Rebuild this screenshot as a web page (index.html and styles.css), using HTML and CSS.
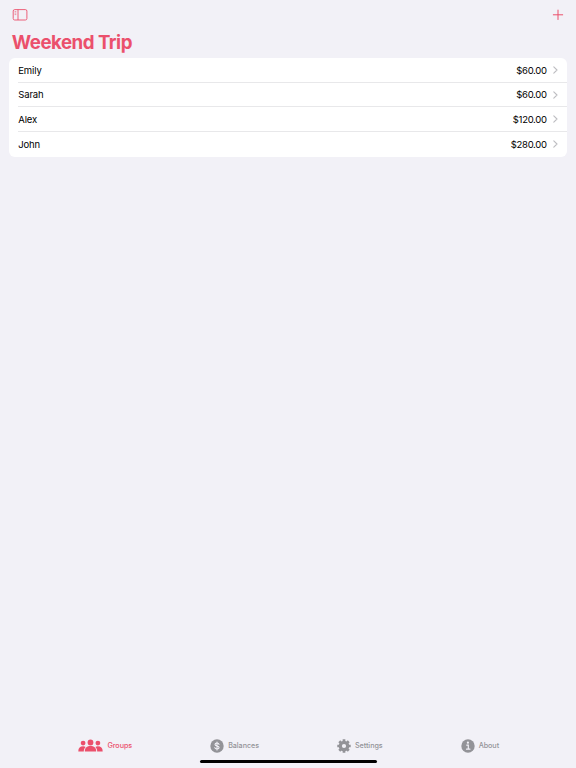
FILE: index.html
```html
<!DOCTYPE html>
<html lang="en">
<head>
  <meta charset="UTF-8">
  <meta name="viewport" content="width=device-width, initial-scale=1.0">
  <title>Weekend Trip</title>
  <link rel="stylesheet" href="styles.css">
</head>
<body>

  <!-- Toolbar -->
  <header class="toolbar">
    <button class="icon-button" aria-label="Toggle sidebar">
      <svg width="16" height="12" viewBox="0 0 16 12" fill="none" stroke="currentColor">
        <rect x="1.2" y="0.6" width="13.7" height="10.4" rx="1.5" stroke-width="0.9"/>
        <path d="M6 0.6v10.4" stroke-width="0.9"/>
        <path d="M2.6 2.6h1.7M2.6 4.1h1.7M2.6 5.6h1.7" stroke-width="0.6"/>
      </svg>
    </button>
    <button class="icon-button" aria-label="Add">
      <svg width="12" height="12" viewBox="0 0 12 12" fill="none" stroke="currentColor" stroke-width="1" stroke-linecap="round">
        <path d="M6 1.1v9.4M1.3 5.8h9.4"/>
      </svg>
    </button>
  </header>

  <main>
    <h1>Weekend Trip</h1>

    <ul class="list">
      <li class="row">
        <span class="name">Emily</span>
        <span class="amount">$60.00</span>
        <svg class="chevron" width="5" height="8" viewBox="0 0 5 8"><path d="M0.8 0.8L4 4L0.8 7.2"/></svg>
      </li>
      <li class="row">
        <span class="name">Sarah</span>
        <span class="amount">$60.00</span>
        <svg class="chevron" width="5" height="8" viewBox="0 0 5 8"><path d="M0.8 0.8L4 4L0.8 7.2"/></svg>
      </li>
      <li class="row">
        <span class="name">Alex</span>
        <span class="amount">$120.00</span>
        <svg class="chevron" width="5" height="8" viewBox="0 0 5 8"><path d="M0.8 0.8L4 4L0.8 7.2"/></svg>
      </li>
      <li class="row">
        <span class="name">John</span>
        <span class="amount">$280.00</span>
        <svg class="chevron" width="5" height="8" viewBox="0 0 5 8"><path d="M0.8 0.8L4 4L0.8 7.2"/></svg>
      </li>
    </ul>
  </main>

  <!-- Tab bar -->
  <nav class="tab-bar">
    <a class="tab active">
      <svg width="25" height="14" viewBox="0 0 25 14" fill="currentColor">
        <circle cx="5.1" cy="4.1" r="2.4"/>
        <circle cx="19.9" cy="4.1" r="2.4"/>
        <path d="M0.3 12.2C0.3 9.2 2.2 7.3 5.1 7.3c1.1 0 2 .3 2.5.6C6.4 9 5.8 10.600 5.800 12.400H.9c-.4 0-.6 0-.6-.2z"/>
        <path d="M24.7 12.2c0-3-1.9-4.9-4.8-4.9-1.1 0-2 .3-2.500.6 1.200 1.100 1.800 2.700 1.800 4.500h4.900c.4 0 .6 0 .6-.2z"/>
        <circle cx="12.5" cy="3.5" r="2.9"/>
        <path d="M6.8 12.2c0-3.2 2.3-5.100 5.700-5.100s5.700 1.900 5.700 5.100c0 .2-.2.3-.5.3H7.300c-.3 0-.5-.1-.5-.3z"/>
      </svg>
      <span>Groups</span>
    </a>
    <a class="tab">
      <svg width="14" height="14" viewBox="0 0 14 14" fill="none">
        <circle cx="7" cy="7" r="6.7" fill="currentColor"/>
        <path d="M9 5.5C8.9 4.6 8.1 4 7 4s-2 .6-2 1.5c0 2 4.1.9 4.1 3C9.1 9.4 8.2 10 7 10s-2.1-.6-2.2-1.5M7 3v8" stroke="#f2f1f7" stroke-width="1.1" stroke-linecap="round"/>
      </svg>
      <span>Balances</span>
    </a>
    <a class="tab">
      <svg width="14" height="14" viewBox="0 0 14 14" fill="none" stroke="currentColor">
        <circle cx="7" cy="7" r="3.7" stroke-width="3.2"/>
        <path d="M7 .3v2M7 11.7v2M.3 7h2M11.7 7h2M2.26 2.26l1.5 1.5M10.24 10.24l1.5 1.5M2.26 11.74l1.5-1.5M10.24 3.76l1.5-1.5" stroke-width="2.7"/>
      </svg>
      <span>Settings</span>
    </a>
    <a class="tab">
      <svg width="14" height="14" viewBox="0 0 14 14" fill="none">
        <circle cx="7" cy="7" r="6.7" fill="currentColor"/>
        <circle cx="6.9" cy="3.7" r="1.1" fill="#f2f1f7"/>
        <path d="M5.7 6.1h1.6v4M5.5 10.2h3.4" stroke="#f2f1f7" stroke-width="1.2" stroke-linecap="round"/>
      </svg>
      <span>About</span>
    </a>
  </nav>

  <div class="home-indicator"></div>

</body>
</html>
```
FILE: styles.css
```css
* {
  box-sizing: border-box;
}

body {
  margin: 0;
  height: 100vh;
  display: flex;
  flex-direction: column;
  background: #f2f1f7;
  color: #000;
  font-family: Inter, sans-serif;
  font-size: 9.5px;
  overflow: hidden;
}

.toolbar {
  display: flex;
  justify-content: space-between;
  align-items: center;
  height: 29px;
  padding: 0 12px;
}

.icon-button {
  display: flex;
  padding: 0;
  border: none;
  background: none;
  color: #eb506c;
}

main {
  flex: 1;
  padding: 0 9.3px;
}

h1 {
  margin: 0;
  padding-left: 2.5px;
  height: 28.9px;
  line-height: 27px;
  font-size: 18.7px;
  font-weight: 700;
  letter-spacing: -0.5px;
  color: #eb506c;
}

.list {
  list-style: none;
  margin: 0;
  padding: 0 0 0 9px;
  background: #fff;
  border-radius: 6px;
}

.row {
  display: flex;
  align-items: center;
  height: 24.7px;
  padding: 0.6px 9px 0 0;
  border-bottom: 1px solid #e8e8ea;
  letter-spacing: -0.15px;
}

.row:last-child {
  border-bottom-color: transparent;
}

.name {
  flex: 1;
}

.amount {
  letter-spacing: -0.3px;
}

.chevron {
  margin-left: 6px;
  fill: none;
  stroke: #bdbdc1;
  stroke-width: 1.1;
  stroke-linecap: round;
  stroke-linejoin: round;
}

.tab-bar {
  display: flex;
  justify-content: center;
  align-items: center;
  gap: 78px;
  height: 29px;
  padding-left: 1px;
  font-size: 7.2px;
  font-weight: 500;
}

.tab {
  display: flex;
  align-items: center;
  gap: 4px;
  color: #939398;
  letter-spacing: -0.05px;
}

.tab span {
  padding-top: 0.6px;
}

.tab.active {
  gap: 4.5px;
  color: #eb506c;
}

.home-indicator {
  width: 177px;
  height: 3px;
  margin: 0 auto 5px;
  border-radius: 2px;
  background: #000;
}
```
